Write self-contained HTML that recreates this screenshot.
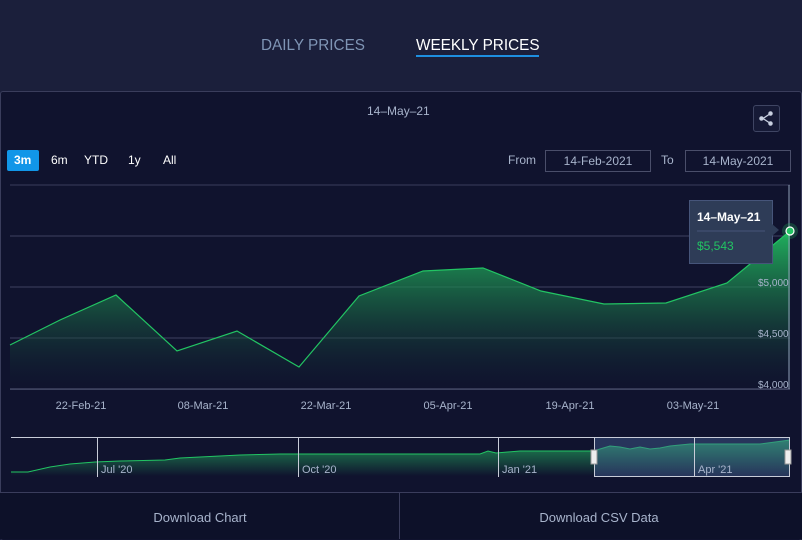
<!DOCTYPE html>
<html><head><style>
body{margin:0;width:802px;height:539px;background:#1b1f3b;font-family:"Liberation Sans",sans-serif;overflow:hidden;position:relative}
.tab{position:absolute;top:37px;font-size:15.3px}
.panel{position:absolute;left:0;top:91px;width:800px;height:448px;background:#10132e;border:1px solid #3a3d5c;border-radius:3px;border-bottom:none}
.t{position:absolute;font-size:12px}
.box{position:absolute;top:150px;height:20px;border:1px solid #4a4e6a;color:#a8b4cc;font-size:12px;text-align:center;line-height:20px}
</style></head><body>
<div class="tab" style="left:261px;color:#7f95b5">DAILY PRICES</div>
<div class="tab" style="left:416px;color:#fff">WEEKLY PRICES</div>
<div style="position:absolute;left:416px;top:55px;width:123px;height:2px;background:#1e8fe0"></div>
<div class="panel"></div>
<div class="t" style="left:367px;top:104px;color:#a8b4cc">14–May–21</div>
<div style="position:absolute;left:753px;top:105px;width:25px;height:25px;border:1px solid #3f4563;border-radius:3px;background:#161a36"></div>
<svg style="position:absolute;left:753px;top:105px" width="27" height="27"><g stroke="#c8d0e0" stroke-width="1.3" fill="none"><line x1="10" y1="13.5" x2="16" y2="9.5"/><line x1="10" y1="13.5" x2="16" y2="17.5"/><circle cx="8.5" cy="13.5" r="1.6" fill="#c8d0e0"/><circle cx="17.5" cy="8.5" r="1.6" fill="#c8d0e0"/><circle cx="17.5" cy="18.5" r="1.6" fill="#c8d0e0"/></g></svg>
<div style="position:absolute;left:7px;top:150px;width:32px;height:21px;background:#1196e8;border-radius:2px"></div>
<div class="t" style="left:14px;top:153px;color:#fff;font-weight:bold">3m</div>
<div class="t" style="left:51px;top:153px;color:#fff">6m</div>
<div class="t" style="left:84px;top:153px;color:#fff">YTD</div>
<div class="t" style="left:128px;top:153px;color:#fff">1y</div>
<div class="t" style="left:163px;top:153px;color:#fff">All</div>
<div class="t" style="left:508px;top:153px;color:#a8b4cc">From</div>
<div class="box" style="left:545px;width:104px">14-Feb-2021</div>
<div class="t" style="left:661px;top:153px;color:#a8b4cc">To</div>
<div class="box" style="left:685px;width:104px">14-May-2021</div>
<svg style="position:absolute;left:0;top:0" width="802" height="539">
<defs><linearGradient id="g" x1="0" y1="0" x2="0" y2="1"><stop offset="0" stop-color="#22c463" stop-opacity="0.9"/><stop offset="0.5" stop-color="#1a6a45" stop-opacity="0.6"/><stop offset="1" stop-color="#10132e" stop-opacity="0.2"/></linearGradient>
<linearGradient id="g2" x1="0" y1="0" x2="0" y2="1"><stop offset="0" stop-color="#1f8f55"/><stop offset="1" stop-color="#10132e"/></linearGradient></defs>
<line x1="10" y1="185" x2="790" y2="185" stroke="#3a3d5c"/>
<g stroke="#3e4260"><line x1="10" y1="236" x2="790" y2="236"/><line x1="10" y1="287" x2="790" y2="287"/><line x1="10" y1="338" x2="790" y2="338"/><line x1="10" y1="389" x2="790" y2="389" stroke="#6a7090"/></g>
<path d="M10,345 L60,320 116,295 177,351 237,331 299,367 359,296 423,271 483,268 541,291 604,304 666,303 727,283 790,231 L790,389 L10,389Z" fill="url(#g)"/>
<path d="M10,345 L60,320 116,295 177,351 237,331 299,367 359,296 423,271 483,268 541,291 604,304 666,303 727,283 790,231" fill="none" stroke="#22c463" stroke-width="1.2"/>
<line x1="789" y1="185" x2="789" y2="389" stroke="#8fa0b8"/>
<circle cx="790" cy="231" r="8" fill="#22c463" opacity="0.25"/><circle cx="790" cy="231" r="4" fill="#22c463" stroke="#fff" stroke-width="1.2"/>
<g fill="#a8b4cc" font-size="10" font-family="Liberation Sans"><text x="758" y="286">$5,000</text><text x="758" y="337">$4,500</text><text x="758" y="388">$4,000</text></g>
<g fill="#a8b4cc" font-size="11" font-family="Liberation Sans" text-anchor="middle"><text x="81" y="409">22-Feb-21</text><text x="203" y="409">08-Mar-21</text><text x="326" y="409">22-Mar-21</text><text x="448" y="409">05-Apr-21</text><text x="570" y="409">19-Apr-21</text><text x="693" y="409">03-May-21</text></g>
<rect x="689.5" y="200.5" width="83" height="63" fill="#2e3c57" stroke="#46557a"/>
<polygon points="772,224 779,230 772,236" fill="#2e3c57"/>
<text x="697" y="221" fill="#fff" font-size="12" font-weight="bold" font-family="Liberation Sans">14–May–21</text>
<line x1="697" y1="231" x2="765" y2="231" stroke="#46557a"/>
<text x="697" y="250" fill="#22c463" font-size="12" font-family="Liberation Sans">$5,543</text>
<line x1="11" y1="437.5" x2="790" y2="437.5" stroke="#c8ccd8"/>
<path d="M11,472 L28,472 50,467 70,464 95,462 120,461 165,460 180,458 200,457 240,455 280,454 320,454 360,454 400,454 440,454 480,454 488,451 496,453 520,451 560,451 594,451 600,449 610,446 620,447 630,449 640,447 650,449 660,448 670,446 690,444 720,444 760,444 790,440 L790,476 L11,476Z" fill="url(#g2)"/>
<path d="M11,472 L28,472 50,467 70,464 95,462 120,461 165,460 180,458 200,457 240,455 280,454 320,454 360,454 400,454 440,454 480,454 488,451 496,453 520,451 560,451 594,451 600,449 610,446 620,447 630,449 640,447 650,449 660,448 670,446 690,444 720,444 760,444 790,440" fill="none" stroke="#22c463"/>
<rect x="594.5" y="437.5" width="195" height="39" fill="#4a6aa0" fill-opacity="0.4" stroke="#c8ccd8"/>
<g stroke="#c8ccd8"><line x1="97.5" y1="437" x2="97.5" y2="477"/><line x1="298.5" y1="437" x2="298.5" y2="477"/><line x1="498.5" y1="437" x2="498.5" y2="477"/><line x1="694.5" y1="437" x2="694.5" y2="477"/></g>
<g fill="#a8b4cc" font-size="11" font-family="Liberation Sans"><text x="101" y="473">Jul '20</text><text x="302" y="473">Oct '20</text><text x="502" y="473">Jan '21</text><text x="698" y="473">Apr '21</text></g>
<rect x="591" y="450" width="6" height="14" fill="#eee" stroke="#999"/><rect x="785" y="450" width="6" height="14" fill="#eee" stroke="#999"/>
<line x1="0" y1="492.5" x2="802" y2="492.5" stroke="#3a3d5c"/>
<rect x="0" y="493" width="802" height="46" fill="#0d1129"/>
<line x1="399.5" y1="493" x2="399.5" y2="539" stroke="#3a3d5c"/>
<g fill="#a8b4cc" font-size="13" font-family="Liberation Sans" text-anchor="middle"><text x="200" y="522">Download Chart</text><text x="599" y="522">Download CSV Data</text></g>
</svg>
</body></html>
